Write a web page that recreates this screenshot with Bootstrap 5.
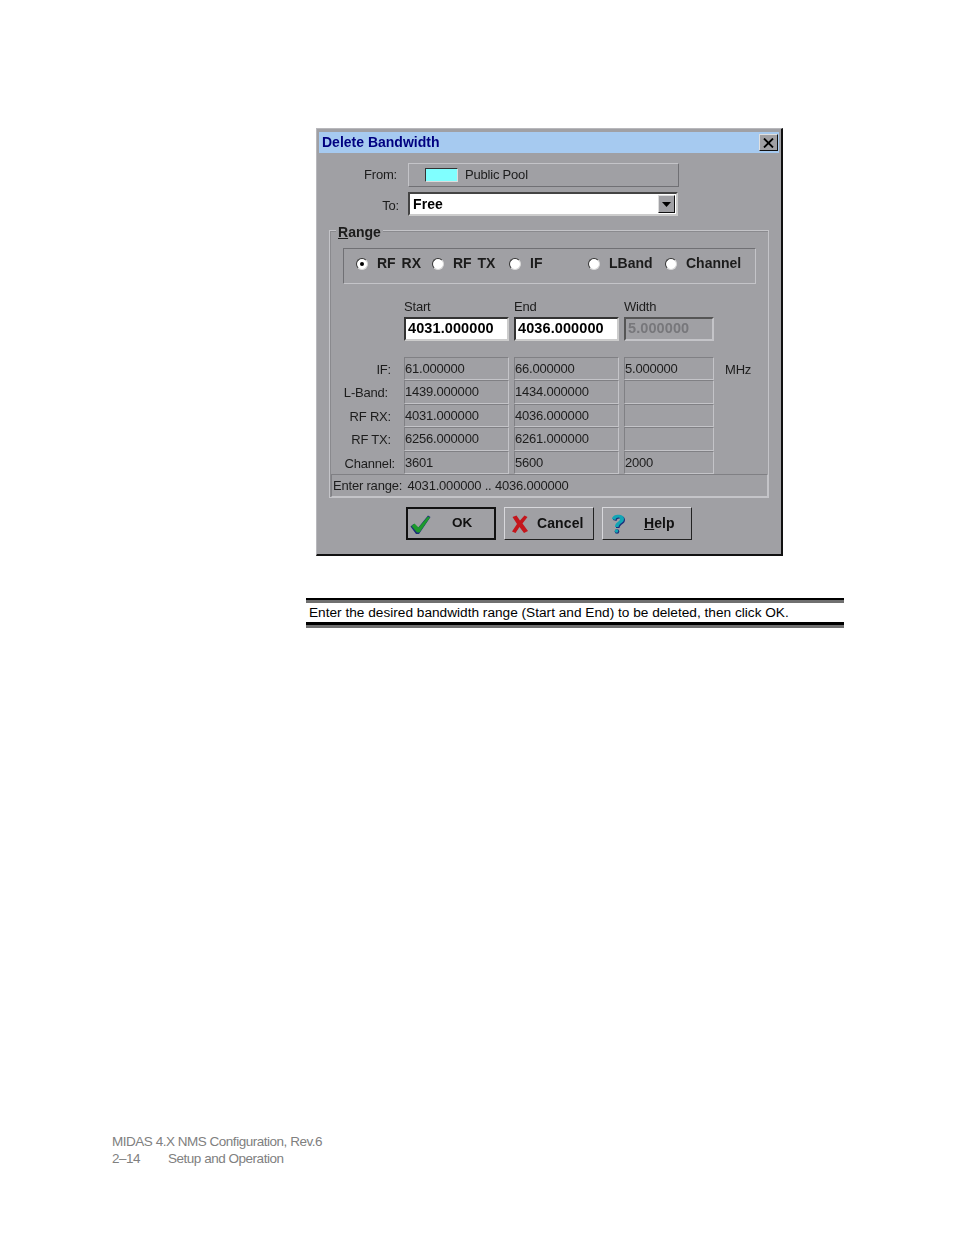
<!DOCTYPE html>
<html lang="en">
<head>
<meta charset="utf-8">
<title>Delete Bandwidth</title>
<link rel="stylesheet" href="https://cdn.jsdelivr.net/npm/bootstrap@5.3.0/dist/css/bootstrap.min.css">
<style>
html,body{margin:0;background:#fff;}
.sheet{width:954px;height:1235px;padding-top:128px;font-family:"Liberation Sans",Arial,sans-serif;}
.dlg{width:467px;height:428px;margin-left:316px;padding:3px 2px 0 2px;background:#a0a0a4;border:1px solid #b8b8bc;border-right:2px solid #111;border-bottom:2px solid #111;color:#1c1c1c;font-size:13px;letter-spacing:-.2px;filter:blur(.35px);}
.ttl{height:21px;background:#a6caf0;color:#000080;font-weight:700;font-size:14px;letter-spacing:0;padding-left:3px;padding-right:1px;}
.xbtn{width:19px;height:17px;background:#a0a0a4;border:1px solid;border-color:#e0e0e0 #111 #111 #e0e0e0;}
.lblcol{width:80px;text-align:right;}
.frombox{width:271px;height:24px;margin-left:11px;border:1px solid;border-color:#c4c4c8 #707074 #707074 #c4c4c8;padding-left:16px;}
.swatch{width:33px;height:14px;background:#80ffff;border:1px solid;border-color:#333 #ddd #ddd #333;margin-right:7px;}
.fromrow{margin-top:10px;margin-left:-2px;}
.torow{margin-top:5px;margin-left:-2px;}
.torow .lblcol{width:82px;padding-top:3px;}
.combo{width:270px;height:24px;margin-left:9px;border:2px solid;border-color:#444 #ccc #ccc #444;background:#fff;color:#000;font-weight:700;font-size:14px;letter-spacing:.1px;padding-left:3px;padding-right:1px;}
.ddbtn{width:17px;height:18px;background:#a0a0a4;border:1px solid;border-color:#ddd #111 #111 #ddd;}
.grp{position:relative;width:440px;height:268px;margin:14px 0 0 10px;border:1px solid;border-color:#c4c4c8;box-shadow:inset 1px 1px 0 #8a8a8e;}
.grpname{position:absolute;left:6px;top:-6px;padding:0 2px;background:#a0a0a4;font-weight:700;font-size:14px;letter-spacing:0;line-height:15px;}
.grpname u,.help u{text-decoration-thickness:1px;}
.radiobar{width:413px;height:36px;margin:17px 0 0 13px;border:1px solid;border-color:#707074 #c4c4c8 #c4c4c8 #707074;font-weight:700;font-size:14px;letter-spacing:0;word-spacing:2px;padding:0 0 5px 12px;}
.rad{width:12px;height:12px;border-radius:50%;background:#fff;border:1px solid;border-color:#333 #d8d8d8 #d8d8d8 #333;margin-right:9px;}
.rad.on::after{content:"";width:4px;height:4px;border-radius:50%;background:#000;}
.ropt1{width:76px;}.ropt2{width:77px;}.ropt3{width:79px;}.ropt4{width:77px;}
.tbl{display:grid;grid-template-columns:69px 105px 105px 90px 1fr;column-gap:5px;margin-top:16px;}
.tbl>*{min-width:0;}
.hd{height:17px;line-height:14px;}
.inp{height:24px;background:#fff;color:#000;font-weight:700;font-size:14.5px;letter-spacing:.1px;line-height:18px;padding-left:2px;border:2px solid;border-color:#333 #ccc #ccc #333;}
.inp.off{background:#a0a0a4;color:#77777b;border-color:#555 #c4c4c8 #c4c4c8 #555;}
.spacer{grid-column:1 / -1;height:16px;}
.rowlbl{height:23.4px;line-height:25px;text-align:right;padding-right:8px;white-space:nowrap;}
.rowlbl.ch{padding-right:4px;}
.rowlbl.lb{padding-right:11px;}
.val{height:23.4px;line-height:21px;border:1px solid;border-color:#808084 #c4c4c8 #c4c4c8 #808084;padding-left:0;}
.unit{height:23.4px;line-height:25px;padding-left:6px;}
.status{height:23px;margin:0 0 0 1px;width:437px;line-height:21px;padding-left:1px;border:1px solid;border-color:#808084 #c4c4c8 #c4c4c8 #808084;}
.status span{margin-left:2px;}
.btnrow{margin:9px 0 0 87px;gap:8px;}
.winbtn{display:flex;align-items:center;width:90px;height:33px;padding:0 0 0 4px;border-radius:0;background:#a0a0a4;color:#111;font-weight:700;font-size:14px;letter-spacing:.1px;border:1px solid;border-color:#d8d8dc #222 #222 #d8d8dc;}
.wok{border:2px solid #111;padding-left:0;}
.whelp{padding-left:2px;}
.oktxt{margin-left:20px;font-size:13.5px;letter-spacing:0;}
.hlptxt{margin-left:15px;}
.winbtn svg{flex:none;}
.cap{width:538px;margin:42px 0 0 306px;height:27px;border-top:2px solid #000;border-bottom:3px solid #000;font-size:13.67px;color:#000;line-height:20px;padding:3px 0 0 3px;background:linear-gradient(#707070 3px,transparent 3px);}
.capline{width:538px;height:3px;margin-left:306px;background:#707070;}
.foot{margin-top:505px;padding-left:112px;color:#808080;font-size:13.5px;line-height:17px;letter-spacing:-.48px;}
.pgn{width:56px;}
</style>
</head>
<body>
<div class="sheet d-flex flex-column">
  <div class="dlg">
    <div class="ttl d-flex align-items-center justify-content-between">
      <span>Delete Bandwidth</span>
      <span class="xbtn d-flex align-items-center justify-content-center">
        <svg width="11" height="10" viewBox="0 0 11 10"><path d="M1 0.5 L10 9.5 M10 0.5 L1 9.5" stroke="#000" stroke-width="1.8" fill="none"/></svg>
      </span>
    </div>
    <div class="fromrow d-flex align-items-center">
      <div class="lblcol">From:</div>
      <div class="frombox d-flex align-items-center"><span class="swatch"></span><span>Public Pool</span></div>
    </div>
    <div class="torow d-flex align-items-center">
      <div class="lblcol">To:</div>
      <div class="combo d-flex align-items-center justify-content-between">
        <span>Free</span>
        <span class="ddbtn d-flex align-items-center justify-content-center">
          <svg width="9" height="5" viewBox="0 0 9 5"><path d="M0 0H9L4.5 5Z" fill="#000"/></svg>
        </span>
      </div>
    </div>
    <div class="grp">
      <div class="grpname"><u>R</u>ange</div>
      <div class="radiobar d-flex align-items-center">
        <div class="ropt1 d-flex align-items-center"><span class="rad on d-flex align-items-center justify-content-center"></span>RF RX</div>
        <div class="ropt2 d-flex align-items-center"><span class="rad"></span>RF TX</div>
        <div class="ropt3 d-flex align-items-center"><span class="rad"></span>IF</div>
        <div class="ropt4 d-flex align-items-center"><span class="rad"></span>LBand</div>
        <div class="d-flex align-items-center"><span class="rad"></span>Channel</div>
      </div>
      <div class="tbl">
        <div></div><div class="hd">Start</div><div class="hd">End</div><div class="hd">Width</div><div></div>
        <div></div><div class="inp">4031.000000</div><div class="inp">4036.000000</div><div class="inp off">5.000000</div><div></div>
        <div class="spacer"></div>
        <div class="rowlbl">IF:</div><div class="val">61.000000</div><div class="val">66.000000</div><div class="val">5.000000</div><div class="unit">MHz</div>
        <div class="rowlbl lb">L-Band:</div><div class="val">1439.000000</div><div class="val">1434.000000</div><div class="val"></div><div></div>
        <div class="rowlbl">RF RX:</div><div class="val">4031.000000</div><div class="val">4036.000000</div><div class="val"></div><div></div>
        <div class="rowlbl">RF TX:</div><div class="val">6256.000000</div><div class="val">6261.000000</div><div class="val"></div><div></div>
        <div class="rowlbl ch">Channel:</div><div class="val">3601</div><div class="val">5600</div><div class="val">2000</div><div></div>
      </div>
      <div class="status">Enter range: <span>4031.000000 .. 4036.000000</span></div>
    </div>
    <div class="btnrow d-flex">
      <button type="button" class="btn winbtn wok">
        <svg width="24" height="24" viewBox="0 0 24 24"><path d="M2.500 14.500 L5.500 12 L9.500 16.500 L20 3.500 L22.500 5 L11 22 L8 22 Z" fill="#1c2f7a"/><path d="M3.500 14 L6.500 11.500 L10.500 15.500 L20 4.500 L22 5.500 L11.500 20.500 L9 20.500 Z" fill="#1d9a2c"/></svg>
        <span class="oktxt">OK</span>
      </button>
      <button type="button" class="btn winbtn">
        <svg width="24" height="20" viewBox="0 0 24 20"><path d="M3.500 3 L7.500 1.500 L11 6.500 L15.500 1.500 L18.500 3 L13.500 9.500 L19 17 L15 19 L10.500 13 L6.500 19 L3 17.500 L8 10 Z" fill="#c4161c"/></svg>
        <span class="ms-1">Cancel</span>
      </button>
      <button type="button" class="btn winbtn whelp help">
        <svg width="24" height="24" viewBox="0 0 24 24"><path d="M7 7 C7 2 19 1 19 7 C19 11 14 11 13.500 15 L10 15 C10 10 15 10 15 7 C15 5 11 5 10.500 8 Z" fill="#1c2f7a" transform="translate(1 1)"/><path d="M7 7 C7 2 19 1 19 7 C19 11 14 11 13.500 15 L10 15 C10 10 15 10 15 7 C15 5 11 5 10.500 8 Z" fill="#12a5b5"/><circle cx="12" cy="19.500" r="2.300" fill="#1c2f7a"/><circle cx="11.500" cy="19" r="1.800" fill="#12a5b5"/></svg>
        <span class="hlptxt"><u>H</u>elp</span>
      </button>
    </div>
  </div>
  <div class="cap">Enter the desired bandwidth range (Start and End) to be deleted, then click OK.</div>
  <div class="capline"></div>
  <div class="foot">
    <div>MIDAS 4.X NMS Configuration, Rev.6</div>
    <div class="d-flex"><span class="pgn">2–14</span><span>Setup and Operation</span></div>
  </div>
</div>
<script src="https://cdn.jsdelivr.net/npm/bootstrap@5.3.0/dist/js/bootstrap.bundle.min.js"></script>
</body>
</html>
